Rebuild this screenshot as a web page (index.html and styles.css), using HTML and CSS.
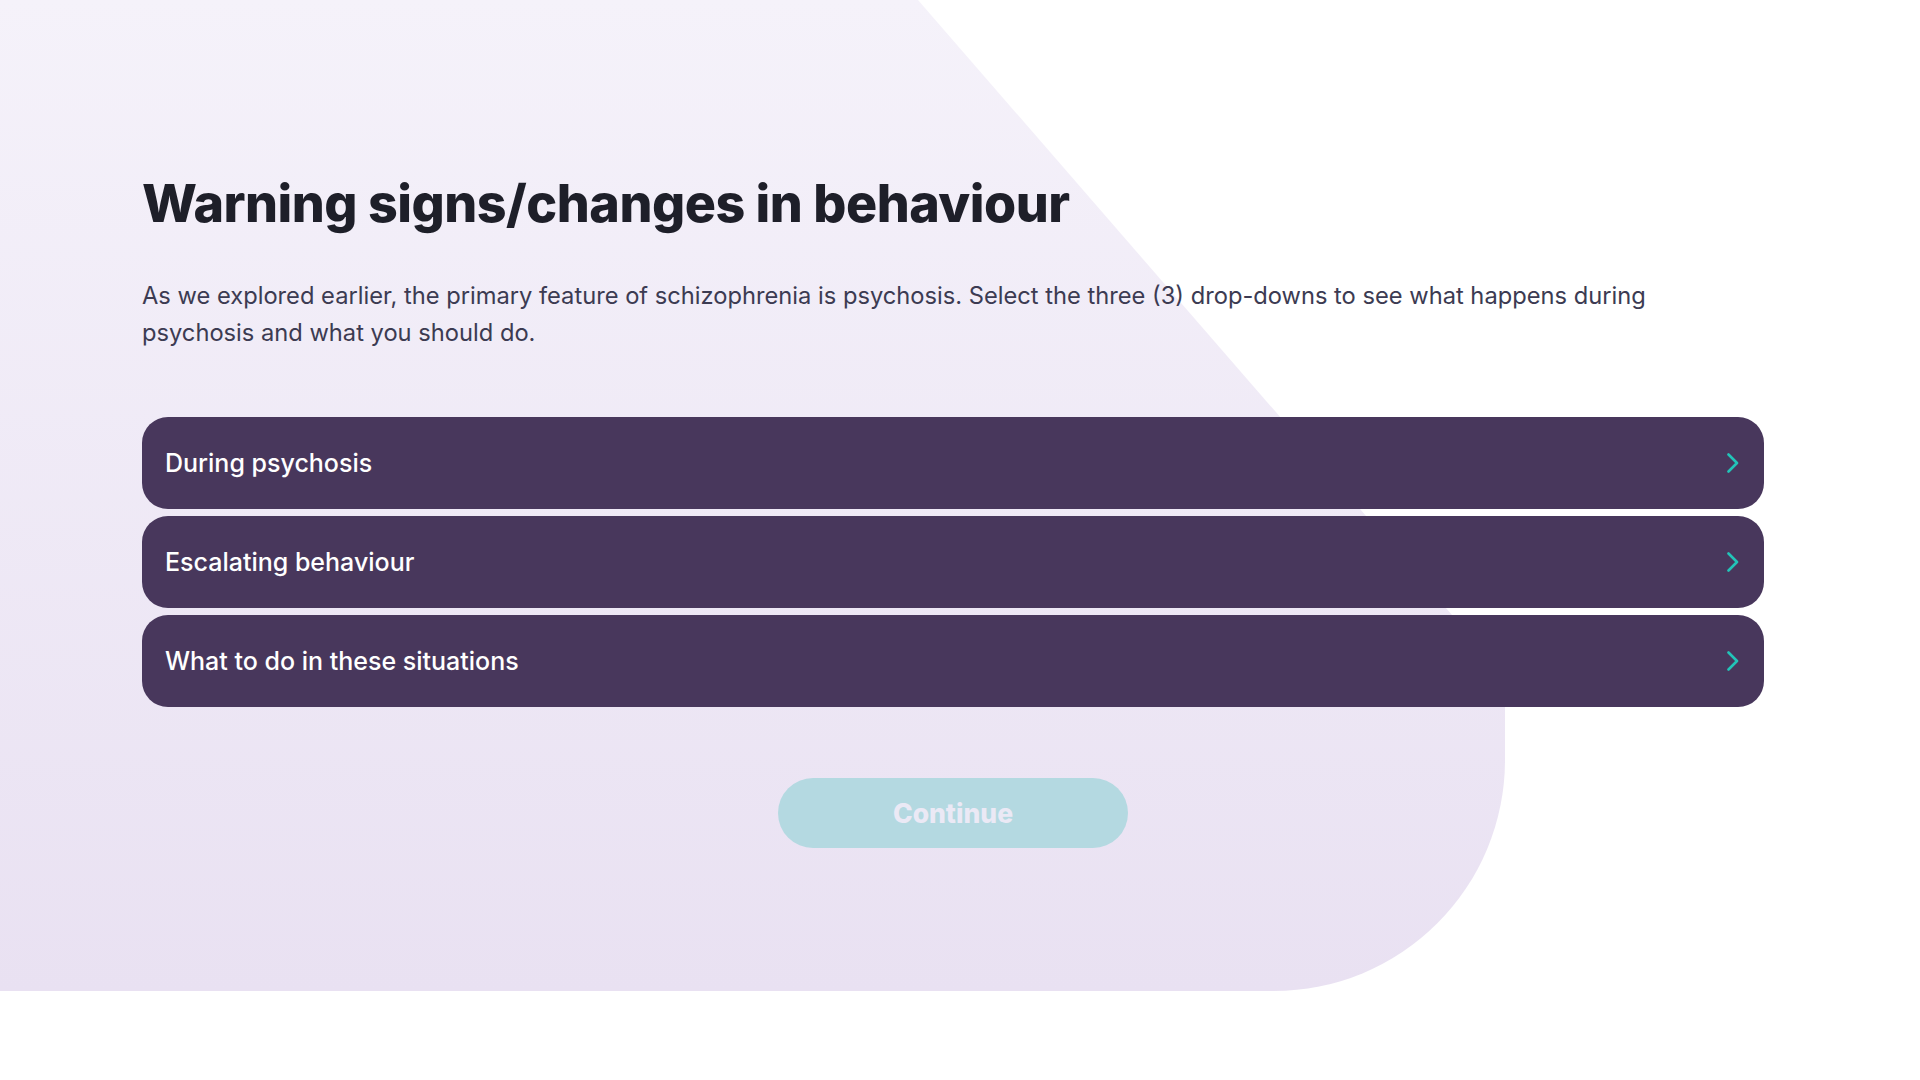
FILE: index.html
```html
<!DOCTYPE html>
<html lang="en">
<head>
<meta charset="utf-8">
<title>Warning signs/changes in behaviour</title>
<link rel="stylesheet" href="styles.css">
</head>
<body>
<div class="backdrop" aria-hidden="true">
  <svg width="1920" height="1080" viewBox="0 0 1920 1080">
    <defs>
      <linearGradient id="bg" x1="0" y1="0" x2="0" y2="1">
        <stop offset="0" stop-color="#f5f2fa"/>
        <stop offset="1" stop-color="#e9e1f2"/>
      </linearGradient>
    </defs>
    <path d="M0 0 H918 L1505 676 V760 A231 231 0 0 1 1274 991 H0 Z" fill="url(#bg)"/>
  </svg>
</div>
<main class="page">
  <h1 class="title">Warning signs/changes in behaviour</h1>
  <p class="intro">As we explored earlier, the primary feature of schizophrenia is psychosis. Select the three (3) drop-downs to see what happens during psychosis and what you should do.</p>
  <div class="accordion">
    <button class="acc-item"><span>During psychosis</span><svg class="chev" viewBox="0 0 12 20"><path d="M1.5 1.5 L10 10 L1.5 18.5"/></svg></button>
    <button class="acc-item"><span>Escalating behaviour</span><svg class="chev" viewBox="0 0 12 20"><path d="M1.5 1.5 L10 10 L1.5 18.5"/></svg></button>
    <button class="acc-item"><span>What to do in these situations</span><svg class="chev" viewBox="0 0 12 20"><path d="M1.5 1.5 L10 10 L1.5 18.5"/></svg></button>
  </div>
  <div class="actions">
    <button class="continue">Continue</button>
  </div>
</main>
</body>
</html>
```

FILE: styles.css
```css
html, body {
  margin: 0;
  padding: 0;
  background: #ffffff;
}
body {
  width: 1920px;
  height: 1080px;
  position: relative;
  overflow: hidden;
  font-family: "Inter", "Noto Sans", sans-serif;
}
.backdrop {
  position: absolute;
  left: 0;
  top: 0;
  z-index: 0;
}
.backdrop svg { display: block; }
.page {
  position: relative;
  z-index: 1;
  width: 1622px;
  margin: 0 0 0 142px;
  padding-top: 172px;
  display: flex;
  flex-direction: column;
}
.title {
  margin: 0;
  font-family: "Inter", sans-serif;
  font-weight: 800;
  font-size: 52px;
  line-height: 64px;
  letter-spacing: -0.5px;
  color: #1e1f29;
}
.intro {
  margin: 41px 0 0;
  max-width: 1570px;
  font-family: "Inter", sans-serif;
  font-size: 23.7px;
  line-height: 37px;
  color: #3c3b52;
}
.accordion {
  margin-top: 66px;
  display: flex;
  flex-direction: column;
  gap: 7px;
}
.acc-item {
  height: 92px;
  border: 0;
  border-radius: 26px;
  background: #48375c;
  color: #ffffff;
  display: flex;
  align-items: center;
  justify-content: space-between;
  padding: 0 25px 0 23px;
  font-family: "Inter", sans-serif;
  font-weight: 500;
  font-size: 25px;
  text-align: left;
}
.chev {
  width: 12px;
  height: 20px;
  fill: none;
  stroke: #22c4b8;
  stroke-width: 2.6;
  stroke-linecap: round;
  stroke-linejoin: round;
}
.actions {
  margin-top: 71px;
  display: flex;
  justify-content: center;
}
.continue {
  width: 350px;
  height: 70px;
  border: 0;
  border-radius: 35px;
  background: #b4d9e1;
  color: #ebe9f5;
  font-family: "Inter", sans-serif;
  font-weight: 800;
  font-size: 26.5px;
}
```
